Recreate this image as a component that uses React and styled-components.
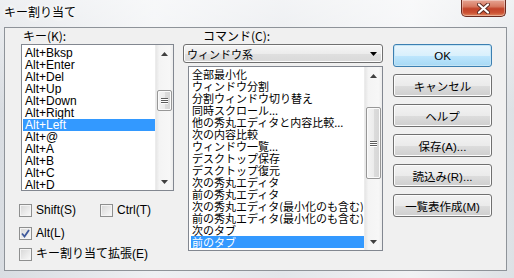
import React from 'react'
import styled, { createGlobalStyle } from 'styled-components'

const GlobalStyle = createGlobalStyle`
  html, body {
    margin: 0;
    padding: 0;
    width: 514px;
    height: 278px;
    overflow: hidden;
  }
  body {
    font-family: "Liberation Sans", "Noto Sans CJK JP", sans-serif;
    font-size: 12px;
    color: #000;
  }
`;

const Window = styled.div`
  width: 514px;
  height: 278px;
  display: flex;
  flex-direction: column;
  background:
    linear-gradient(180deg, rgba(255,255,255,0.55) 0%, rgba(255,255,255,0) 40%),
    linear-gradient(90deg, #d9dde2 0%, #eef0f3 30%, #e3e6ea 55%, #f1f2f4 80%, #dde1e5 100%);
`;

const TitleBar = styled.div`
  height: 27px;
  display: flex;
  align-items: flex-start;
  justify-content: space-between;
`;

const Title = styled.div`
  font-family: "Noto Sans CJK JP", sans-serif;
  font-size: 12px;
  line-height: 14px;
  margin: 5px 0 0 4px;
  text-shadow: 0 0 6px #fff, 0 0 8px #fff, 0 0 10px #fff;
`;

const CloseButton = styled.div`
  width: 43px;
  height: 16px;
  margin-right: 8px;
  border: 1px solid #6b2b20;
  border-top: none;
  border-radius: 0 0 5px 5px;
  background: linear-gradient(180deg, #e6a493 0%, #d77a62 40%, #c2432a 55%, #cc5233 80%, #e08a62 100%);
  box-shadow: inset 0 0 0 1px rgba(255,255,255,0.35);
  display: flex;
  align-items: center;
  justify-content: center;
`;

const Client = styled.div`
  margin: 0 7px 0 4px;
  height: 242px;
  border: 1px solid #8e9399;
  background: #f0f0f0;
  display: flex;
`;

const Column = styled.div`
  display: flex;
  flex-direction: column;
  margin-left: ${(p) => p.left}px;
  width: ${(p) => p.width}px;
  flex-shrink: 0;
`;

const FieldLabel = styled.div`
  font-family: "Noto Sans CJK JP", sans-serif;
  line-height: 12px;
  height: 12px;
  margin: 2px 0 2px ${(p) => p.indent}px;
  white-space: nowrap;
`;

const ListBox = styled.div`
  display: flex;
  margin-left: ${(p) => p.indent}px;
  width: ${(p) => p.width}px;
  height: ${(p) => p.height}px;
  box-sizing: border-box;
  border: 1px solid #828790;
  background: #fff;
  overflow: hidden;
`;

const Items = styled.div`
  flex: 1;
  min-width: 0;
  padding: ${(p) => p.pad};
  overflow: hidden;
`;

const Item = styled.div`
  height: 12px;
  line-height: 12px;
  white-space: nowrap;
  overflow: hidden;
  padding-left: ${(p) => p.textPad}px;
  font-size: ${(p) => p.size}px;
  font-family: ${(p) => (p.cjk ? '"Noto Sans CJK JP", sans-serif' : '"Liberation Sans", sans-serif')};
  background: ${(p) => (p.selected ? '#3399ff' : 'transparent')};
  color: ${(p) => (p.selected ? '#fff' : '#000')};
`;

const ScrollTrack = styled.div`
  width: 17px;
  flex-shrink: 0;
  display: flex;
  flex-direction: column;
  align-items: center;
  background: linear-gradient(90deg, #e6e6e6 0%, #f4f4f4 20%, #f7f7f7 80%, #ececec 100%);
  border-left: 1px solid #ececec;
`;

const Arrow = styled.div`
  height: 17px;
  width: 17px;
  display: flex;
  align-items: center;
  justify-content: center;
  flex-shrink: 0;
`;

const Gap = styled.div`
  height: ${(p) => p.size}px;
  flex-shrink: 0;
`;

const Filler = styled.div`
  flex: 1;
`;

const Thumb = styled.div`
  width: 15px;
  height: ${(p) => p.size}px;
  box-sizing: border-box;
  border: 1px solid #979797;
  border-radius: 2px;
  background: linear-gradient(90deg, #f4f4f4 0%, #ececec 50%, #dcdcdc 51%, #d6d6d6 100%);
  box-shadow: inset 0 0 0 1px #fbfbfb;
  display: flex;
  flex-direction: column;
  align-items: center;
  justify-content: center;
  gap: 1px;
  flex-shrink: 0;
`;

const Grip = styled.div`
  width: 7px;
  height: 1px;
  background: #5c5c5c;
  box-shadow: 0 1px 0 #fff;
`;

const CheckArea = styled.div`
  display: flex;
  flex-direction: column;
  margin-top: ${(p) => p.top}px;
  gap: ${(p) => p.gap}px;
`;

const CheckRow = styled.div`
  display: flex;
  gap: 8px;
`;

const CheckItem = styled.label`
  display: flex;
  align-items: center;
  gap: 4px;
  width: ${(p) => (p.width ? `${p.width}px` : 'auto')};
  height: 13px;
  line-height: 13px;
  white-space: nowrap;
`;

const Box = styled.span`
  width: 13px;
  height: 13px;
  box-sizing: border-box;
  border: 1px solid #8e8f8f;
  background: linear-gradient(135deg, #d6d6d6 0%, #ececec 60%, #fafafa 100%);
  box-shadow: inset 0 0 0 1px #f4f4f4;
  display: flex;
  align-items: center;
  justify-content: center;
  flex-shrink: 0;
`;

const CheckText = styled.span`
  font-family: "Liberation Sans", "Noto Sans CJK JP", sans-serif;
  font-size: 12px;
`;

const Combo = styled.div`
  height: 19px;
  box-sizing: border-box;
  border: 1px solid #707070;
  border-radius: 3px;
  background: linear-gradient(180deg, #f6f6f6 0%, #ececec 50%, #dfdfdf 51%, #d9d9d9 100%);
  box-shadow: inset 0 0 0 1px #fcfcfc;
  display: flex;
  align-items: center;
  justify-content: space-between;
  padding: 0 5px 0 3px;
  margin-bottom: 3px;
  font-family: "Noto Sans CJK JP", sans-serif;
  font-size: 11px;
`;

const ButtonStack = styled.div`
  display: flex;
  flex-direction: column;
  gap: 7px;
  margin-top: 16px;
`;

const Button = styled.div`
  height: 23px;
  box-sizing: border-box;
  border: 1px solid ${(p) => (p.primary ? '#3c7fb1' : '#707070')};
  border-radius: 3px;
  background: ${(p) =>
    p.primary
      ? 'linear-gradient(180deg, #eaf6fd 0%, #d9f0fc 50%, #bee6fd 51%, #a7d9f5 100%)'
      : 'linear-gradient(180deg, #f2f2f2 0%, #ebebeb 50%, #dddddd 51%, #cfcfcf 100%)'};
  box-shadow: inset 0 0 0 1px ${(p) => (p.primary ? '#c4e5f6' : '#fcfcfc')};
  display: flex;
  align-items: center;
  justify-content: center;
  font-family: "Liberation Sans", "Noto Sans CJK JP", sans-serif;
  font-size: 11.5px;
  white-space: nowrap;
`;

function UpArrow() {
  return (
    <svg width="7" height="4" viewBox="0 0 7 4"><path d="M0 4 L3.5 0 L7 4 Z" fill="#404040" /></svg>
  );
}

function DownArrow() {
  return (
    <svg width="7" height="4" viewBox="0 0 7 4"><path d="M0 0 L7 0 L3.5 4 Z" fill="#404040" /></svg>
  );
}

function ScrollBar({ before, size }) {
  return (
    <ScrollTrack>
      <Arrow><UpArrow /></Arrow>
      <Gap size={before} />
      <Thumb size={size}><Grip /><Grip /><Grip /></Thumb>
      <Filler />
      <Arrow><DownArrow /></Arrow>
    </ScrollTrack>
  );
}

function Check({ label, checked, width }) {
  return (
    <CheckItem width={width}>
      <Box>
        {checked && (
          <svg width="9" height="9" viewBox="0 0 9 9">
            <path d="M1 4.5 L3.5 7.5 L8 1" fill="none" stroke="#3f5a9c" strokeWidth="1.8" />
          </svg>
        )}
      </Box>
      <CheckText>{label}</CheckText>
    </CheckItem>
  );
}

const keys = ['Alt+Bksp', 'Alt+Enter', 'Alt+Del', 'Alt+Up', 'Alt+Down', 'Alt+Right', 'Alt+Left', 'Alt+@', 'Alt+A', 'Alt+B', 'Alt+C', 'Alt+D'];

const commands = [
  '全部最小化',
  'ウィンドウ分割',
  '分割ウィンドウ切り替え',
  '同時スクロール...',
  '他の秀丸エディタと内容比較...',
  '次の内容比較',
  'ウィンドウ一覧...',
  'デスクトップ保存',
  'デスクトップ復元',
  '次の秀丸エディタ',
  '前の秀丸エディタ',
  '次の秀丸エディタ(最小化のも含む)',
  '前の秀丸エディタ(最小化のも含む)',
  '次のタブ',
  '前のタブ',
];

const buttons = ['OK', 'キャンセル', 'ヘルプ', '保存(A)...', '読込み(R)...', '一覧表作成(M)'];

export default function App() {
  return (
    <Window>
      <GlobalStyle />
      <TitleBar>
        <Title>キー割り当て</Title>
        <CloseButton>
          <svg width="13" height="11" viewBox="0 0 13 11">
            <path d="M2 1.5 L11 9.5 M11 1.5 L2 9.5" stroke="#5a2a22" strokeWidth="4" strokeLinecap="round" />
            <path d="M2 1.5 L11 9.5 M11 1.5 L2 9.5" stroke="#fff" strokeWidth="2.2" strokeLinecap="round" />
          </svg>
        </CloseButton>
      </TitleBar>

      <Client>
        <Column left={14} width={155}>
          <FieldLabel indent={4}>キー(K):</FieldLabel>
          <ListBox indent={2} width={153} height={147}>
            <Items pad="2px 0 0 1px">
              {keys.map((k) => (
                <Item key={k} size={12} textPad={2} selected={k === 'Alt+Left'}>{k}</Item>
              ))}
            </Items>
            <ScrollBar before={28} size={21} />
          </ListBox>
          <CheckArea top={13} gap={10}>
            <CheckRow>
              <Check label="Shift(S)" width={73} />
              <Check label="Ctrl(T)" />
            </CheckRow>
            <Check label="Alt(L)" checked />
          </CheckArea>
          <CheckArea top={8} gap={0}>
            <Check label="キー割り当て拡張(E)" />
          </CheckArea>
        </Column>

        <Column left={9} width={200}>
          <FieldLabel indent={20}>コマンド(C):</FieldLabel>
          <Combo>
            <span>ウィンドウ系</span>
            <svg width="7" height="4" viewBox="0 0 7 4"><path d="M0 0 L7 0 L3.5 4 Z" fill="#000" /></svg>
          </Combo>
          <ListBox indent={5} width={195} height={185}>
            <Items pad="1px 0 0 2px">
              {commands.map((c) => (
                <Item key={c} cjk size={11} textPad={1} selected={c === '前のタブ'}>{c}</Item>
              ))}
            </Items>
            <ScrollBar before={23} size={72} />
          </ListBox>
        </Column>

        <Column left={10} width={99}>
          <ButtonStack>
            {buttons.map((b, i) => (
              <Button key={b} primary={i === 0}>{b}</Button>
            ))}
          </ButtonStack>
        </Column>
      </Client>
    </Window>
  );
}
